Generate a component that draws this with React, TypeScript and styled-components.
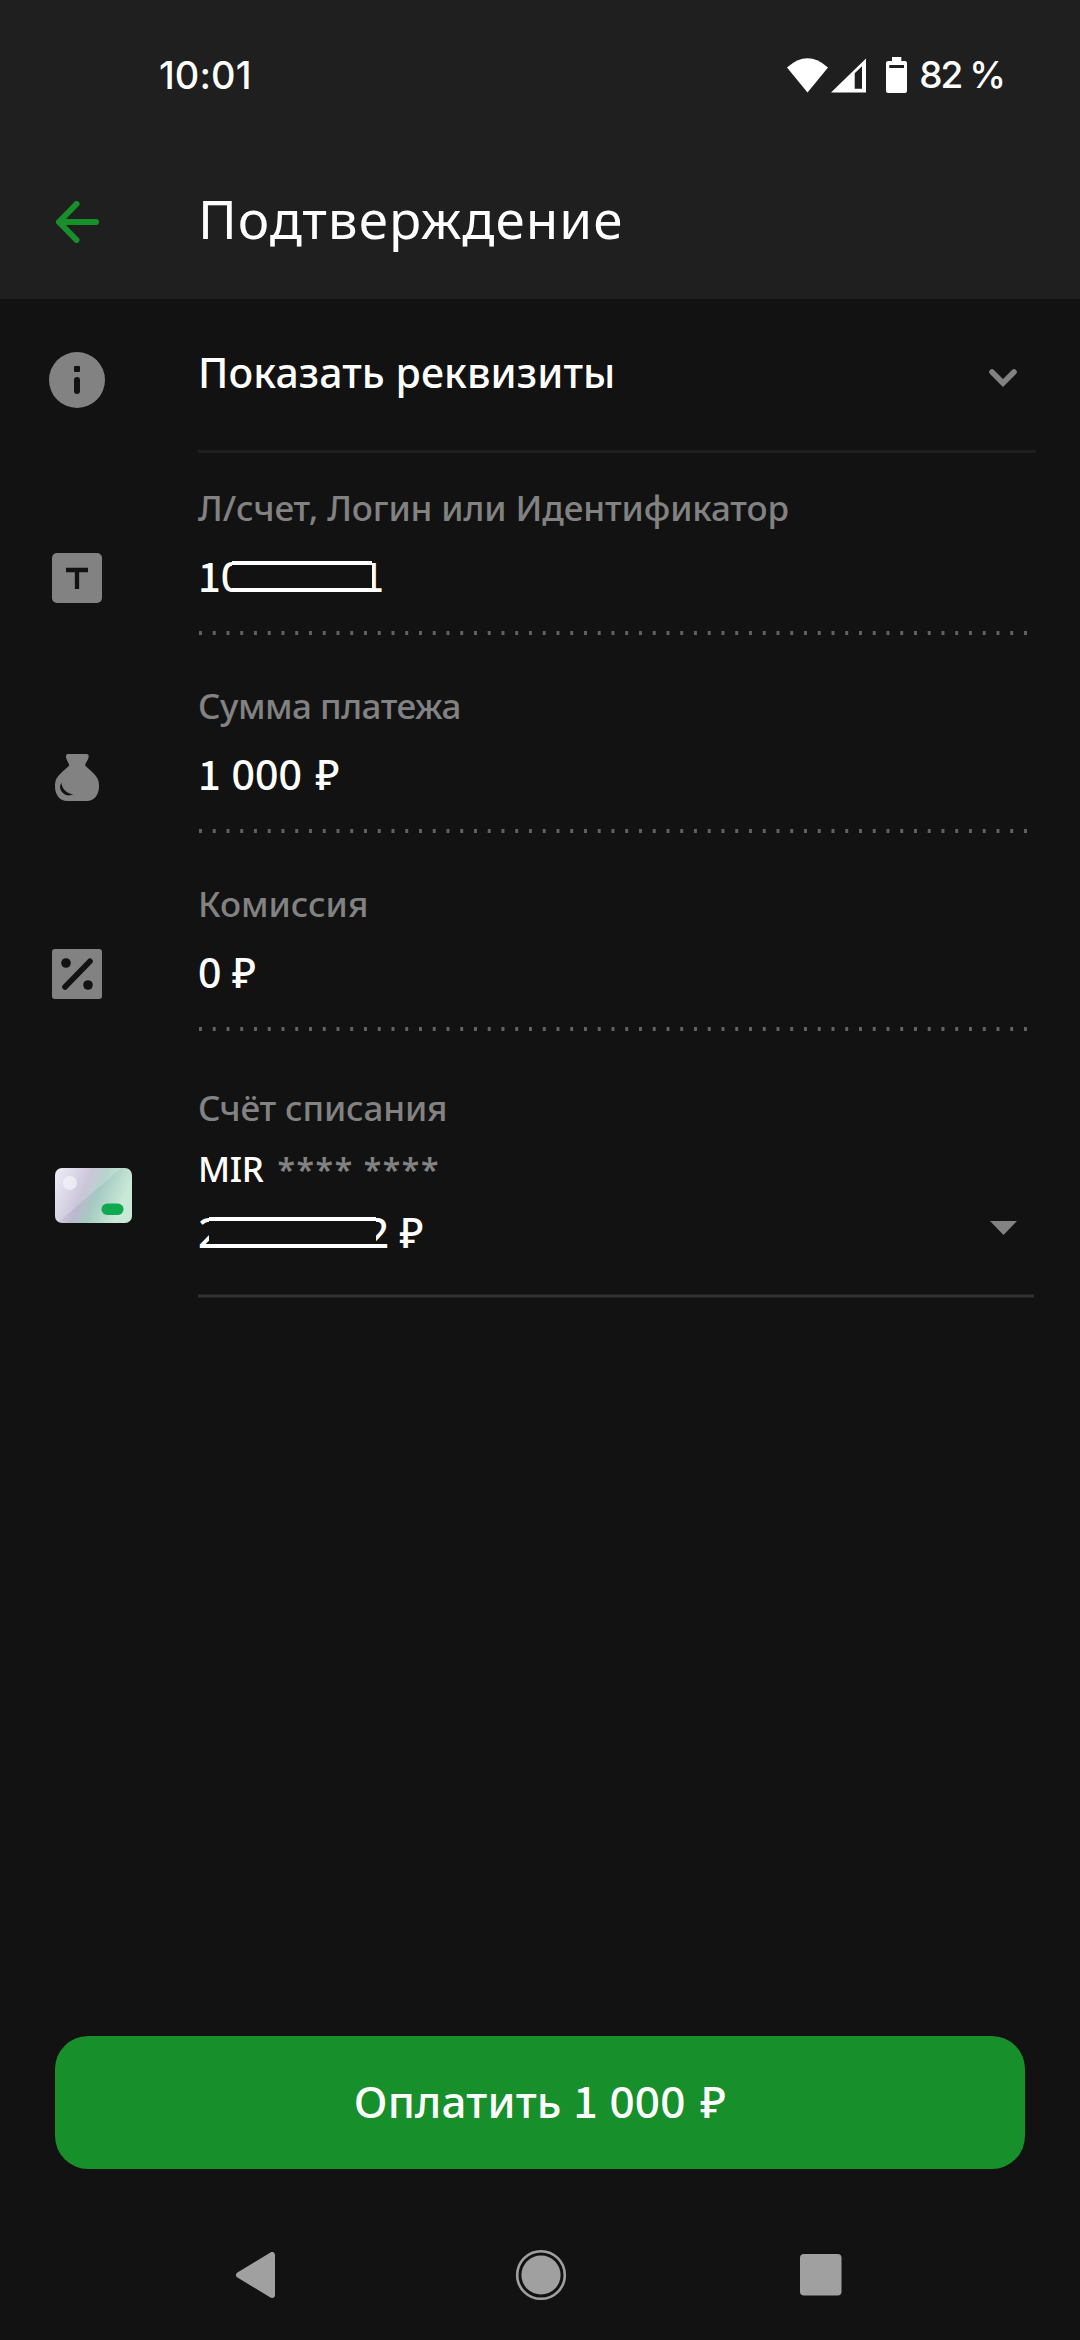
import React from 'react';
import styled, { createGlobalStyle } from 'styled-components';

const color = {
  page: '#121212',
  header: '#1f1f1f',
  muted: '#828282',
  green: '#178f2b',
  nav: '#a0a0a0',
};

const GlobalStyle = createGlobalStyle`
  *, *::before, *::after { box-sizing: border-box; }
  body { margin: 0; background: ${color.page}; }
  svg { display: block; flex: none; }
`;

const Page = styled.div`
  display: flex;
  flex-direction: column;
  width: 1080px;
  height: 2340px;
  overflow: hidden;
  background: ${color.page};
  color: #fff;
  font-family: 'Noto Sans', 'Open Sans', sans-serif;
`;

const Header = styled.header`
  flex: none;
  height: 299px;
  background: ${color.header};
`;

const StatusBar = styled.div`
  display: flex;
  align-items: center;
  height: 145px;
  padding: 5px 76px 0 159px;
  font: 500 37px/44px Inter, sans-serif;
`;

const Clock = styled.time`
  flex: 1;
  font-size: 38px;
  letter-spacing: 0.1px;
`;

const StatusIcons = styled.div`
  display: flex;
  align-items: center;
`;

const Battery = styled.span`
  display: flex;
  align-items: center;
  gap: 12px;
  margin-left: 20px;
  letter-spacing: -2px;
`;

const AppBar = styled.div`
  display: grid;
  grid-template-columns: 198px 1fr;
  align-items: center;
  height: 154px;
`;

const BackButton = styled.button`
  display: flex;
  width: 100px;
  padding: 0 0 0 56px;
  border: 0;
  background: none;
`;

const Title = styled.h1`
  margin: 0 0 7px;
  font-size: 53px;
  font-weight: 400;
  line-height: 64px;
  letter-spacing: 1px;
`;

const Row = styled.section<{ $height: number }>`
  display: grid;
  grid-template-columns: 198px 838px;
  flex: none;
  height: ${p => p.$height}px;
`;

const IconCell = styled.div<{ $top: number; $left: number }>`
  padding: ${p => p.$top}px 0 0 ${p => p.$left}px;
`;

const RequisitesToggle = styled.div`
  display: flex;
  justify-content: space-between;
  padding: 53px 19px 0 0;
  border-bottom: 3px solid #1f1f1f;
`;

const ToggleText = styled.span`
  font-size: 41px;
  font-weight: 500;
  line-height: 40px;
  letter-spacing: 0.1px;
`;

const ChevronWrap = styled.span`
  padding-top: 17px;
`;

const Field = styled.div<{ $top: number }>`
  display: flex;
  flex-direction: column;
  padding-top: ${p => p.$top}px;
`;

const Label = styled.span<{ $tracking: number }>`
  color: ${color.muted};
  font-size: 35px;
  font-weight: 500;
  line-height: 42px;
  letter-spacing: ${p => p.$tracking}px;
  white-space: nowrap;
`;

const Value = styled.span<{ $gap: number }>`
  margin-top: ${p => p.$gap}px;
  font-size: 41px;
  font-weight: 500;
  line-height: 50px;
  white-space: nowrap;
`;

const One = styled.span`
  font-family: 'Noto Sans CJK SC', 'Noto Sans', sans-serif;
  font-size: 40px;
  line-height: 1;
`;

const Ruble = styled.span`
  margin-left: 3px;
`;

const Redaction = styled.span<{ $width: number }>`
  position: relative;
  display: inline-block;
  width: ${p => p.$width}px;
  height: 1px;

  &::after {
    content: '';
    position: absolute;
    top: -30px;
    left: -12px;
    right: -11px;
    height: 31px;
    border: solid #fff;
    border-width: 4px 0;
    background: ${color.page};
  }
`;

const DottedLine = styled.div`
  width: 830px;
  height: 4px;
  margin: 30px 0 0 1px;
  background: linear-gradient(90deg, #626262 3px, transparent 3px) 0 0 / 13.76px 4px repeat-x;
`;

const CardName = styled.span`
  display: flex;
  align-items: baseline;
  gap: 14px;
  margin-top: 19px;
  font-size: 35px;
  font-weight: 500;
  line-height: 42px;
  letter-spacing: -0.4px;
`;

const CardNumber = styled.span`
  color: ${color.muted};
  font-size: 32px;
  font-weight: 600;
  letter-spacing: 1.6px;
`;

const AmountRow = styled.div`
  display: flex;
  justify-content: space-between;
  margin-top: 16px;
  padding-right: 19px;
`;

const DropdownMark = styled.span`
  padding-top: 14px;
`;

const Underline = styled.div`
  width: 836px;
  height: 4px;
  margin-top: 37px;
  border: solid #232323;
  border-width: 1px 0;
  background: #303030;
`;

const Spacer = styled.div`
  flex: 1;
`;

const PayButton = styled.button`
  flex: none;
  height: 133px;
  margin: 0 55px 40px;
  padding: 0 0 3px;
  border: 0;
  border-radius: 33px;
  background: ${color.green};
  color: #fff;
  font: 500 44px/60px 'Noto Sans', sans-serif;
  letter-spacing: 0.17px;

  ${One} { font-size: 43px; }
`;

const NavBar = styled.nav`
  display: flex;
  flex: none;
  align-items: center;
  justify-content: space-between;
  height: 131px;
  padding: 0 238px 0 235px;
`;

const WifiIcon = () => (
  <svg width="41" height="35" viewBox="0 0 41 35" fill="#fff">
    <path d="M0 9.5Q20.5-9 41 9.5L20.5 34.5Z" />
  </svg>
);

const SignalIcon = () => (
  <svg width="38" height="35" viewBox="-3 0 38 35" fill="#fff">
    <path fillRule="evenodd" d="M35 0.5V34.5H0ZM23.7 15.3V30.7H31V8.3Z" />
  </svg>
);

const BatteryIcon = () => (
  <svg width="21" height="36" viewBox="0 0 21 36" fill="#fff">
    <path
      fillRule="evenodd"
      d="M6 0H15.3V4H19Q21 4 21 6V34Q21 36 19 36H2Q0 36 0 34V6Q0 4 2 4H6ZM3.3 8V11H18V8Z"
    />
  </svg>
);

const ArrowIcon = () => (
  <svg width="44" height="42" viewBox="0 0 44 42" fill="none" stroke={color.green} strokeWidth="6" strokeLinecap="round" strokeLinejoin="round">
    <path d="M20.5 3L3 21L20.5 39M3 21H40" />
  </svg>
);

const InfoIcon = () => (
  <svg width="56" height="56" viewBox="0 0 56 56">
    <circle cx="28" cy="28" r="28" fill={color.muted} />
    <rect x="25" y="14" width="6" height="6" rx="1" fill={color.page} />
    <rect x="25" y="25" width="6" height="17" rx="3" fill={color.page} />
  </svg>
);

const ChevronIcon = () => (
  <svg width="28" height="18" viewBox="0 0 28 18" fill="none" stroke={color.muted} strokeWidth="5.6" strokeLinecap="round">
    <path d="M3 3L14 14L25 3" />
  </svg>
);

const TypeIcon = () => (
  <svg width="50" height="50" viewBox="0 0 50 50">
    <rect width="50" height="50" rx="5" fill={color.muted} />
    <path d="M14 17H36M25 17V36" stroke={color.page} strokeWidth="4.3" />
  </svg>
);

const BagIcon = () => (
  <svg width="44" height="47" viewBox="45 42 132 141">
    <path
      fill={color.muted}
      d="M84 42H140Q147 42 146 50L144 58L136 72V77C150 92 177 106 177 134V140C177 164 162 183 140 183H82C60 183 45 164 45 140V134C45 106 74 92 87 77V73L79 56Q75 42 84 42Z"
    />
    <path fill={color.page} d="M64 128C66 147 80 160 100 163C90 168 78 168 70 160C59 150 58 138 64 128Z" />
  </svg>
);

const PercentIcon = () => (
  <svg width="50" height="50" viewBox="0 0 50 50">
    <rect width="50" height="50" rx="3" fill={color.muted} />
    <circle cx="14" cy="14" r="4.8" fill={color.page} />
    <circle cx="36" cy="36" r="4.8" fill={color.page} />
    <path d="M13 38L38 12.3" stroke={color.page} strokeWidth="5.6" strokeLinecap="round" />
  </svg>
);

const BankCardIcon = () => (
  <svg width="77" height="55" viewBox="0 0 77 55">
    <defs>
      <linearGradient id="card" gradientUnits="userSpaceOnUse" x1="2" y1="8" x2="72" y2="38">
        <stop offset="0" stopColor="#e6e3f2" />
        <stop offset="0.4" stopColor="#bdb8cf" />
        <stop offset="0.58" stopColor="#a5cac3" />
        <stop offset="0.92" stopColor="#c9e8d6" />
      </linearGradient>
      <clipPath id="cardShape">
        <rect width="77" height="55" rx="7" />
      </clipPath>
    </defs>
    <g clipPath="url(#cardShape)">
      <rect width="77" height="55" fill="url(#card)" />
      <path d="M0 0H66L0 57Z" fill="#fff" opacity="0.2" />
      <circle cx="15" cy="15" r="7" fill="#fff" opacity="0.5" />
      <rect x="46.5" y="35.5" width="22" height="11.5" rx="5.7" fill="#0fa94f" />
    </g>
  </svg>
);

const DropdownIcon = () => (
  <svg width="27" height="14" viewBox="0 0 27 14" fill={color.muted}>
    <path d="M0 0H27L13.5 14Z" />
  </svg>
);

const NavBackIcon = () => (
  <svg width="46" height="46" viewBox="0 0 46 46" fill={color.nav} stroke={color.nav} strokeWidth="6" strokeLinejoin="round">
    <path d="M4 23L37 3V43Z" />
  </svg>
);

const NavHomeIcon = () => (
  <svg width="52" height="52" viewBox="0 0 52 52">
    <circle cx="26" cy="26" r="23.8" fill="none" stroke={color.nav} strokeWidth="2.6" />
    <circle cx="26" cy="26" r="19.6" fill={color.nav} />
  </svg>
);

const NavRecentsIcon = () => (
  <svg width="42" height="42" viewBox="0 0 42 42" fill={color.nav}>
    <rect width="41.5" height="41.5" rx="4" />
  </svg>
);

export default function App() {
  return (
    <Page>
      <GlobalStyle />
      <Header>
        <StatusBar>
          <Clock>10:01</Clock>
          <StatusIcons>
            <WifiIcon />
            <SignalIcon />
            <Battery>
              <BatteryIcon />
              82 %
            </Battery>
          </StatusIcons>
        </StatusBar>
        <AppBar>
          <BackButton aria-label="Назад">
            <ArrowIcon />
          </BackButton>
          <Title>Подтверждение</Title>
        </AppBar>
      </Header>

      <Row $height={154}>
        <IconCell $top={53} $left={49}>
          <InfoIcon />
        </IconCell>
        <RequisitesToggle>
          <ToggleText>Показать реквизиты</ToggleText>
          <ChevronWrap>
            <ChevronIcon />
          </ChevronWrap>
        </RequisitesToggle>
      </Row>

      <Row $height={198}>
        <IconCell $top={100} $left={52}>
          <TypeIcon />
        </IconCell>
        <Field $top={34}>
          <Label $tracking={-0.12}>Л/счет, Логин или Идентификатор</Label>
          <Value $gap={22}>
            <One>1</One>0<Redaction $width={117} />
            <One>1</One>
          </Value>
          <DottedLine />
        </Field>
      </Row>

      <Row $height={198}>
        <IconCell $top={103} $left={55}>
          <BagIcon />
        </IconCell>
        <Field $top={34}>
          <Label $tracking={-0.5}>Сумма платежа</Label>
          <Value $gap={22}>
            <One>1</One> 000 <Ruble>₽</Ruble>
          </Value>
          <DottedLine />
        </Field>
      </Row>

      <Row $height={198}>
        <IconCell $top={100} $left={52}>
          <PercentIcon />
        </IconCell>
        <Field $top={34}>
          <Label $tracking={0}>Комиссия</Label>
          <Value $gap={22}>0 ₽</Value>
          <DottedLine />
        </Field>
      </Row>

      <Row $height={250}>
        <IconCell $top={121} $left={55}>
          <BankCardIcon />
        </IconCell>
        <Field $top={40}>
          <Label $tracking={-0.17}>Счёт списания</Label>
          <CardName>
            MIR <CardNumber>**** ****</CardNumber>
          </CardName>
          <AmountRow>
            <Value $gap={0}>
              2<Redaction $width={144} />2 ₽
            </Value>
            <DropdownMark>
              <DropdownIcon />
            </DropdownMark>
          </AmountRow>
          <Underline />
        </Field>
      </Row>

      <Spacer />

      <PayButton>
        Оплатить <One>1</One> 000 <Ruble>₽</Ruble>
      </PayButton>
      <NavBar>
        <NavBackIcon />
        <NavHomeIcon />
        <NavRecentsIcon />
      </NavBar>
    </Page>
  );
}
